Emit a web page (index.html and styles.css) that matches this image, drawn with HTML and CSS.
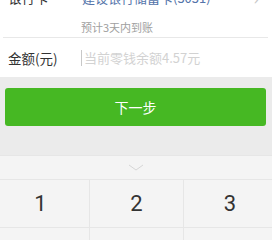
FILE: index.html
```html
<!DOCTYPE html>
<html lang="zh">
<head>
<meta charset="utf-8">
<link rel="stylesheet" href="styles.css">
</head>
<body>
<div class="page">
  <section class="form">
    <div class="row row-card">
      <div class="line">
        <span class="label">银行卡</span>
        <span class="bank">建设银行储蓄卡(3031)</span>
        <span class="arrow">›</span>
      </div>
      <div class="sub">预计3天内到账</div>
    </div>
    <div class="sep"></div>
    <div class="row row-amount">
      <span class="label">金额(元)</span>
      <span class="input"><span class="cursor"></span><span class="placeholder">当前零钱余额4.57元</span></span>
    </div>
  </section>
  <button class="next">下一步</button>
  <section class="keyboard">
    <div class="kb-top">
      <svg width="16" height="8" viewBox="0 0 16 8"><path d="M1 1 L8 6 L15 1" fill="none" stroke="#d6d6d6" stroke-width="1"/></svg>
    </div>
    <div class="keys">
      <div class="key key-left">1</div>
      <div class="key">2</div>
      <div class="key key-right">3</div>
      <div class="key"></div>
      <div class="key"></div>
      <div class="key"></div>
    </div>
  </section>
</div>
</body>
</html>
```
FILE: styles.css
```css
html, body {
  margin: 0;
  padding: 0;
}
body {
  width: 272px;
  height: 240px;
  overflow: hidden;
  background: #ebebeb;
  font-family: "Noto Sans CJK SC", "Noto Sans", sans-serif;
  color: #333;
}
.page {
  display: flex;
  flex-direction: column;
}
.form {
  background: #fff;
  margin-top: -19px;
}
.row-card {
  padding: 6px 0 2px 8px;
}
.line {
  display: flex;
  align-items: center;
  height: 20px;
}
.label {
  width: 73px;
  flex: none;
  font-size: 13.5px;
  line-height: 20px;
  color: #333;
}
.bank {
  font-size: 13px;
  color: #5474aa;
  flex: 1;
  margin-left: 1px;
}
.arrow {
  color: #c8c8c8;
  font-size: 18px;
  margin-right: 13px;
}
.sub {
  margin: 13px 0 0 73px;
  font-size: 11px;
  line-height: 15px;
  color: #a0a0a0;
}
.sep {
  height: 1px;
  background: #e8e8e8;
  margin: 0 4px 0 3px;
}
.row-amount {
  display: flex;
  align-items: center;
  height: 39px;
  padding-left: 8px;
}
.input {
  display: flex;
  align-items: center;
}
.cursor {
  width: 1px;
  height: 16px;
  background: #c8c8c8;
  margin-right: 2px;
}
.placeholder {
  font-size: 13px;
  color: #d2d2d2;
}
.next {
  margin: 11px 6px 29px 5px;
  height: 38px;
  border: none;
  border-radius: 3px;
  background: #46b823;
  color: #fff;
  font-family: "Noto Sans CJK SC", sans-serif;
  font-size: 14px;
  padding: 0;
}
.keyboard {
  background: #f4f4f4;
  border-top: 1px solid #e6e6e6;
}
.kb-top {
  height: 23px;
  display: flex;
  align-items: center;
  justify-content: center;
  padding-top: 1px;
  box-sizing: border-box;
}
.keys {
  display: grid;
  grid-template-columns: 89px 93px 1fr;
  grid-auto-rows: 47px;
  gap: 1px;
  background: #e6e6e6;
  border-top: 1px solid #e6e6e6;
}
.key {
  background: #f4f4f4;
  display: flex;
  align-items: center;
  justify-content: center;
  font-family: Roboto, "Noto Sans", sans-serif;
  font-size: 22px;
  color: #333;
}
.key-left {
  padding-right: 8px;
}
.key-right {
  padding-left: 4px;
}
```
